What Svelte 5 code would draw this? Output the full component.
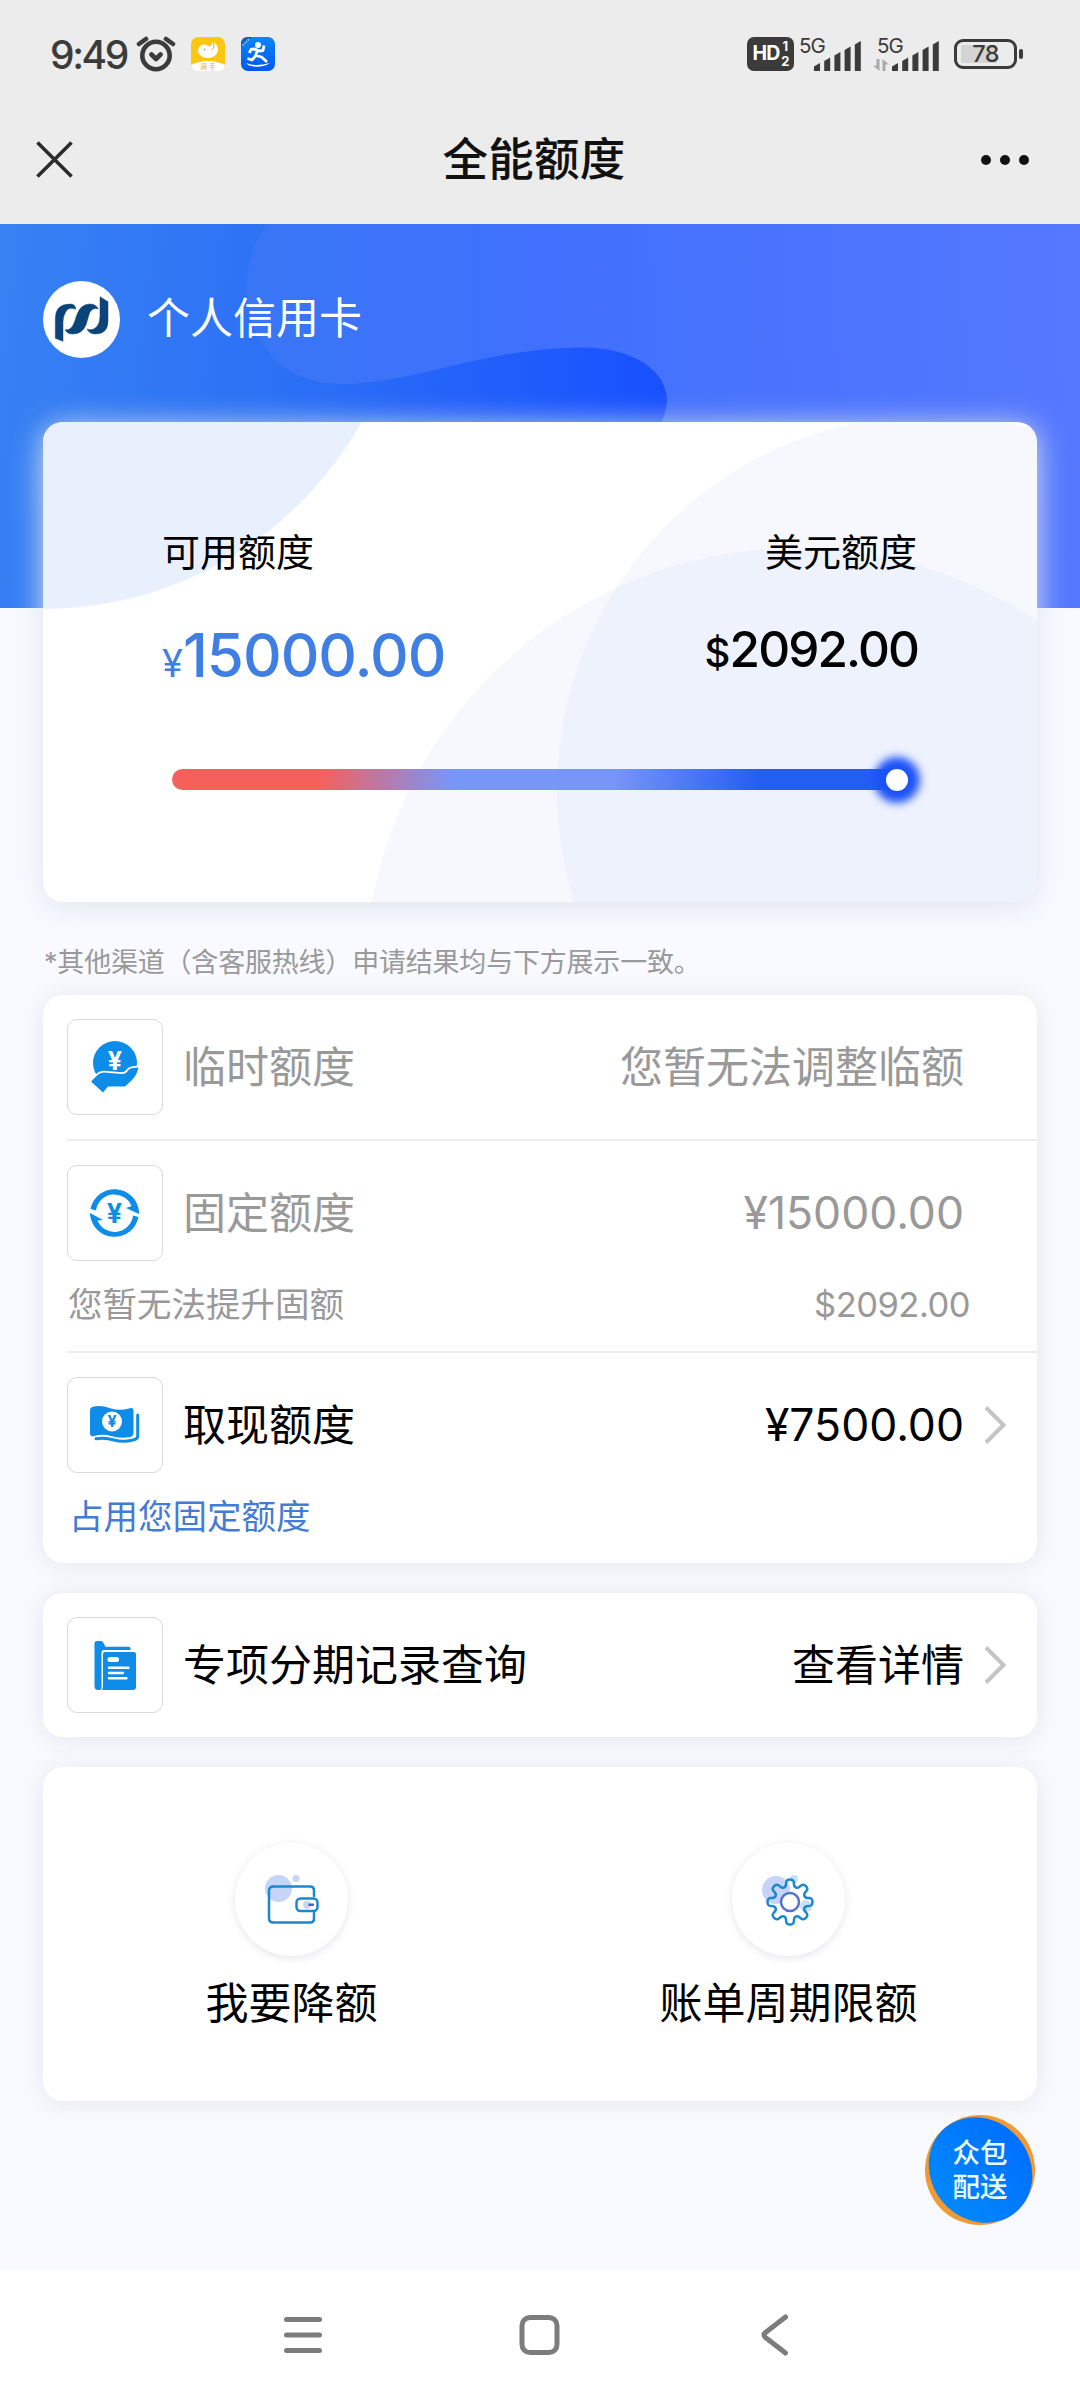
<script lang="ts">
    interface Row {
        icon: string;
        label: string;
        value: string;
        muted?: boolean;
        arrow?: boolean;
        note?: string;
        noteValue?: string;
    }

    const limits: Row[] = [
        { icon: "hand", label: "临时额度", value: "您暂无法调整临额", muted: true },
        {
            icon: "cycle",
            label: "固定额度",
            value: "¥15000.00",
            muted: true,
            note: "您暂无法提升固额",
            noteValue: "$2092.00",
        },
        { icon: "cash", label: "取现额度", value: "¥7500.00", arrow: true, note: "占用您固定额度" },
    ];
    const records: Row[] = [
        { icon: "folder", label: "专项分期记录查询", value: "查看详情", arrow: true },
    ];

    const bars = [8, 13.5, 19, 24.5, 30];

    // outline of an eight-tooth gear, corners rounded through the edge midpoints
    function gear(cx: number, cy: number, outer: number, inner: number) {
        const pts: number[][] = [];
        for (let i = 0; i < 8; i++) {
            const steps = [
                [-14, inner],
                [-10, outer],
                [10, outer],
                [14, inner],
            ];
            for (const [deg, r] of steps) {
                const a = ((i * 45 + deg) * Math.PI) / 180;
                pts.push([cx + r * Math.sin(a), cy - r * Math.cos(a)]);
            }
        }
        const mid = (p: number[], q: number[]) =>
            ((p[0] + q[0]) / 2).toFixed(1) + " " + ((p[1] + q[1]) / 2).toFixed(1);
        let d = "M" + mid(pts[pts.length - 1], pts[0]);
        pts.forEach((p, i) => {
            d += "Q" + p[0].toFixed(1) + " " + p[1].toFixed(1) + " " + mid(p, pts[(i + 1) % pts.length]);
        });
        return d + "Z";
    }
</script>

{#snippet signal()}
    <svg class="signal" viewBox="0 0 48 32">
        {#each bars as h, i}
            <path d="M{i * 10.2} 31V{34.5 - h}l6 -3.5V31Z" />
        {/each}
    </svg>
{/snippet}

{#snippet rows(list: Row[])}
    {#each list as row}
        <div class="row" class:muted={row.muted}>
            <div class="line">
                <div class="ico">
                    <svg viewBox="0 0 96 96">
                        {#if row.icon === "hand"}
                            <circle cx="48" cy="44" r="22" />
                            <text class="yen light" x="48" y="50.5" font-size="25">¥</text>
                            <path
                                class="gap"
                                d="M24 62.500L29.500 57Q33 53.500 37 53.500L55 55Q59 55 62 50.500Q64 48.500 71.500 48.500Q70 56 65 61L58 67.500H41L36 73.500Z"
                            />
                        {:else if row.icon === "cycle"}
                            <path d="M23.500 44A24.500 24.500 0 0 1 72 47V49L59 43L64.500 41A18.500 18.500 0 0 0 29 45.500Z" />
                            <path d="M71.500 52A24.500 24.500 0 0 1 23 49V48L36 55L30.500 55.500A18.500 18.500 0 0 0 66 50.500Z" />
                            <text class="yen" x="47.500" y="58" font-size="27">¥</text>
                        {:else if row.icon === "cash"}
                            <path d="M23 33Q23 30 27 29.500Q34 28 44 31.500Q53 34 62 31.500Q66.500 30 66.500 34V56Q66.500 59 63 60Q53 62 44 59Q36 56.500 27 59Q23 60 23 56Z" />
                            <path class="stroke" d="M70.700 38V59Q70.700 62 66 63Q56 65.500 47 63Q38 60.500 29 61.800" />
                            <circle class="light" cx="45" cy="44.500" r="10" />
                            <text class="yen" x="45" y="50" font-size="16">¥</text>
                        {:else}
                            <path d="M27.500 26Q27.500 24 30 24H34Q35.500 24 36.500 26L38.500 29.700H61.500Q63.500 29.700 63.500 31.700V33H37Q34.500 33 34.500 36V72Q34 73 31 73Q27.500 73 27.500 69Z" />
                            <path d="M38 35H67Q69 35 69 37V70Q69 73 66 73H34.500Q36 72 36 69V37Q36 35 38 35Z" />
                            <path class="lines" d="M42 50.700H61.500M42 56H56M42 61.200H59.500" />
                            <path class="lines thick" d="M43 42.500H49.500" />
                        {/if}
                    </svg>
                </div>
                <span class="label">{row.label}</span>
                <span class="value" class:num={row.value.startsWith("¥")}>{row.value}</span>
                {#if row.arrow}
                    <svg class="chevron" viewBox="0 0 24 40"><path d="M3 2.500L20.500 20L3 37.500" /></svg>
                {/if}
            </div>
            {#if row.note}
                <div class="note" class:link={!row.muted}>
                    <span>{row.note}</span>
                    {#if row.noteValue}<span class="usd">{row.noteValue}</span>{/if}
                </div>
            {/if}
        </div>
    {/each}
{/snippet}

<div class="screen">
    <div class="status">
        <span class="time">9:49</span>
        <svg class="alarm" viewBox="0 0 40 36">
            <circle cx="20" cy="19.500" r="13.700" />
            <path d="M3 8L10 3M37 8L30 3M15.500 18.500L20 23L24.500 18.500" />
        </svg>
        <svg class="app" viewBox="0 0 34 34">
            <rect width="34" height="34" rx="7" fill="#fdc60f" />
            <path d="M0 28Q8 24 17 24T34 28Q33 34 27 34H7Q1 34 0 28Z" fill="#fff" />
            <path d="M7 13C8 8 13 6 17.500 9C20 10 21 8 21 5.500C27 6 28.500 13 25.500 17C22 22 13 22 9 18Q7 16 7 13Z" fill="#fff" />
            <circle cx="13.500" cy="12.500" r="0.900" fill="#b9a37a" />
            <path d="M22.500 6q1.500 5-2 6.500" fill="none" stroke="#e6b416" stroke-width="1" />
            <text x="17" y="32" font-size="6.500" text-anchor="middle" fill="#dcb53f">骑 手</text>
        </svg>
        <svg class="app" viewBox="0 0 34 34">
            <defs>
                <linearGradient id="run" x1="0" y1="0" x2="0" y2="1">
                    <stop offset="0" stop-color="#0a86fb" />
                    <stop offset="1" stop-color="#0058ec" />
                </linearGradient>
            </defs>
            <rect width="34" height="34" rx="7" fill="url(#run)" />
            <path d="M0 11L11 0H7Q0 0 0 7Z" fill="#0a5fc0" />
            <path d="M1.500 8.500L8.500 1.500" stroke="#9cc4f5" stroke-width="2" stroke-dasharray="1.500 1" />
            <circle cx="17" cy="8" r="3" fill="#fff" />
            <path
                d="M9 12.500L14 12L18 14L22 13.500L23 8.500M16.500 13L14.500 19L11 23L6.500 21.500M15 18.500L20.500 20L26 25M9.500 13L8.500 16"
                fill="none"
                stroke="#fff"
                stroke-width="2.800"
                stroke-linejoin="round"
            />
            <path d="M5 26Q14 30 29 26Q20 32 8 28.500Z" fill="#fff" />
        </svg>
        <span class="spacer"></span>
        <div class="hd">
            <b>HD</b>
            <span><b>1</b><b>2</b></span>
        </div>
        <div class="net">
            <span>5G</span>
            {@render signal()}
        </div>
        <div class="net second">
            <span>5G</span>
            <svg class="arrows" viewBox="0 0 16 12"><path d="M0 6.500h3.500V0H6.500V12ZM16 5.500h-3.500V12H9.500V0Z" /></svg>
            {@render signal()}
        </div>
        <div class="battery"><span>78</span></div>
    </div>

    <div class="bar">
        <svg class="close" viewBox="0 0 38 38"><path d="M1.500 1.500L36.500 36.500M36.500 1.500L1.500 36.500" /></svg>
        <h1>全能额度</h1>
        <svg class="more" viewBox="0 0 50 12">
            <circle cx="6" cy="6" r="5" />
            <circle cx="25" cy="6" r="5" />
            <circle cx="44" cy="6" r="5" />
        </svg>
    </div>

    <div class="page">
        <div class="hero">
            <svg class="wave" viewBox="0 224 1080 384">
                <defs>
                    <linearGradient id="deep" gradientUnits="userSpaceOnUse" x1="0" y1="300" x2="665" y2="380">
                        <stop offset="0" stop-color="#3781f3" />
                        <stop offset="0.500" stop-color="#2a6df6" />
                        <stop offset="1" stop-color="#1850ff" />
                    </linearGradient>
                    <linearGradient id="soft" gradientUnits="userSpaceOnUse" x1="247" y1="300" x2="1080" y2="260">
                        <stop offset="0" stop-color="#3876f5" />
                        <stop offset="0.350" stop-color="#4070fd" />
                        <stop offset="1" stop-color="#5578ff" />
                    </linearGradient>
                </defs>
                <rect y="224" width="1080" height="384" fill="url(#deep)" />
                <path
                    d="M267 224C246 252 240 296 256 332C273 369 306 385 346 384C420 382 480 349 580 347.500C638 347 668 374 667 402Q666 412 661 424L640 608H1080V224Z"
                    fill="url(#soft)"
                />
            </svg>
            <div class="owner">
                <svg class="logo" viewBox="39 35 231 231">
                    <circle cx="154.500" cy="150.500" r="115.500" fill="#fff" />
                    <path d="M76 207V148Q76 104 120 104Q137 104 137 120Q115 110 106 130Q99 140 99 160V216Z" />
                    <path d="M105 181Q116 184 126 173Q133 163 140 138Q151 104 180 104Q197 104 205 119Q188 114 179 130Q174 145 168 167Q157 194 128 194Q112 194 105 181Z" />
                    <path d="M210 82L234 97V155Q234 194 196 194Q178 194 171 179Q189 185 200 172Q210 162 210 140Z" />
                </svg>
                <span>个人信用卡</span>
            </div>
        </div>

        <section class="card summary">
            <svg class="deco" viewBox="0 0 994 480">
                <circle cx="0" cy="-178" r="365" fill="#e9f0fd" />
                <circle cx="754" cy="558" r="432" fill="#d0defb" fill-opacity="0.200" />
                <circle cx="889" cy="368" r="375" fill="#d0defb" fill-opacity="0.200" />
            </svg>
            <div class="totals">
                <div class="total">
                    <span class="caption">可用额度</span>
                    <span class="amount main"><small>¥</small>15000.00</span>
                </div>
                <div class="total right">
                    <span class="caption">美元额度</span>
                    <span class="amount"><small>$</small>2092.00</span>
                </div>
            </div>
            <div class="track"><i></i></div>
        </section>

        <p class="tip">*其他渠道（含客服热线）申请结果均与下方展示一致。</p>

        <section class="card">
            {@render rows(limits)}
        </section>
        <section class="card">
            {@render rows(records)}
        </section>

        <section class="card actions">
            <div class="action">
                <svg viewBox="0 0 113 113">
                    <circle cx="43.500" cy="45.500" r="13.500" fill="#c6d4f8" />
                    <circle cx="61" cy="35.500" r="3.500" fill="#c6d4f8" />
                    <path d="M79 53V47.500Q79 43.500 75 43.500H38.500Q34 43.500 34 48V75Q34 79.500 38.500 79.500H75Q79 79.500 79 75.500V70" />
                    <rect x="61.500" y="55.500" width="21" height="12.500" rx="4" />
                    <circle cx="72" cy="61.700" r="4" fill="#c6d4f8" />
                    <path class="clasp" d="M74.500 61.700H78" />
                </svg>
                <span>我要降额</span>
            </div>
            <div class="action">
                <svg viewBox="0 0 113 113">
                    <circle cx="44" cy="47" r="14" fill="#c6d4f8" />
                    <circle cx="62" cy="36" r="4" fill="#c6e0fb" />
                    <circle cx="74" cy="63" r="6" fill="#c6e0fb" />
                    <path d={gear(58, 59, 22.8, 15.8)} />
                    <circle cx="58" cy="59" r="9" stroke="#5173cb" fill="#fff" />
                </svg>
                <span>账单周期限额</span>
            </div>
        </section>

        <div class="float">
            <i></i>
            <span>众包<br />配送</span>
        </div>
    </div>

    <div class="nav">
        <svg viewBox="0 0 44 44"><path d="M5.500 6.500H38.500M5.500 22H38.500M5.500 37.500H38.500" /></svg>
        <svg viewBox="0 0 44 44"><rect x="4" y="4.500" width="35" height="35" rx="8" /></svg>
        <svg viewBox="0 0 44 44"><path d="M31.500 4L11.500 19.500Q8.500 22 11.500 24.500L31.500 40" /></svg>
    </div>
</div>

<style>
    :global(body) {
        background: #f8faff;
    }
    * {
        box-sizing: border-box;
    }
    .screen {
        display: flex;
        flex-direction: column;
        width: 1080px;
        height: 2400px;
        overflow: hidden;
        font-family: Inter, "Noto Sans CJK SC", sans-serif;
        line-height: 1;
        color: #000;
        white-space: nowrap;
    }
    svg {
        display: block;
        flex: none;
    }
    .status {
        display: flex;
        align-items: center;
        height: 108px;
        padding: 0 57px 0 50px;
        background: #ececec;
        color: #3b3b3b;
    }
    .time {
        width: 86px;
        font-size: 39px;
        font-weight: 500;
        letter-spacing: -2.4px;
    }
    .alarm {
        width: 40px;
        height: 36px;
        margin-right: 15px;
        fill: none;
        stroke: #3b3b3b;
        stroke-width: 4.6;
        stroke-linecap: round;
        stroke-linejoin: round;
    }
    .app {
        width: 34px;
        height: 34px;
        margin-right: 16px;
    }
    .spacer {
        flex: 1;
    }
    .hd {
        display: flex;
        align-items: center;
        justify-content: center;
        gap: 2px;
        width: 47px;
        height: 34px;
        border-radius: 7px;
        background: #3b3b3b;
        color: #fff;
        font-size: 19.5px;
        letter-spacing: -1px;
    }
    .hd span {
        display: flex;
        flex-direction: column;
        align-items: center;
        gap: 2px;
        font-size: 13px;
        line-height: 13px;
    }
    .net {
        display: grid;
        width: 63px;
        height: 36px;
        margin-left: 5px;
        font-size: 20.5px;
        letter-spacing: -1px;
    }
    .net > * {
        grid-area: 1 / 1;
    }
    .net.second {
        width: 67px;
        margin-left: 11px;
    }
    .net.second > span {
        padding-left: 4px;
    }
    .signal {
        align-self: end;
        justify-self: end;
        width: 48px;
        height: 32px;
        fill: #3b3b3b;
    }
    .arrows {
        align-self: end;
        width: 16px;
        height: 12px;
        margin-bottom: 1px;
        fill: #a9a9a9;
    }
    .battery {
        position: relative;
        display: flex;
        align-items: center;
        justify-content: center;
        width: 63px;
        height: 30px;
        margin: 0 6px 0 14px;
        border: 3px solid #3b3b3b;
        border-radius: 9px;
        background: linear-gradient(#d4d4d4, #d4d4d4) 4px center / 36px 18px no-repeat;
        font-size: 23.5px;
        font-weight: 500;
        letter-spacing: -0.8px;
    }
    .battery::after {
        content: "";
        position: absolute;
        right: -9px;
        width: 4px;
        height: 10px;
        border-radius: 2px;
        background: #3b3b3b;
    }
    .bar {
        display: flex;
        align-items: center;
        justify-content: space-between;
        height: 116px;
        padding: 0 50px 13px 36px;
        background: #ececec;
    }
    .bar h1 {
        margin: 0;
        padding-left: 15px;
        font-size: 45.5px;
        font-weight: 500;
        letter-spacing: 0.3px;
        color: #111;
    }
    .close {
        width: 37px;
        height: 37px;
        stroke: #2b2b2b;
        stroke-width: 3.6;
    }
    .more {
        width: 50px;
        height: 12px;
        fill: #111;
    }
    .page {
        position: relative;
        height: 2046px;
        background: #f8faff;
    }
    .hero {
        position: relative;
        height: 384px;
        padding: 57px 43px;
    }
    .wave {
        position: absolute;
        inset: 0;
        width: 1080px;
        height: 384px;
    }
    .owner {
        position: relative;
        display: flex;
        align-items: center;
        gap: 27px;
        color: #fff;
        font-size: 43px;
    }
    .owner span {
        margin-top: -2px;
    }
    .logo {
        width: 77px;
        height: 77px;
        fill: #0b4478;
        stroke: #0b4478;
        stroke-width: 1.5;
    }
    .logo circle {
        stroke: none;
    }
    .card {
        position: relative;
        margin: 0 43px 30px;
        border-radius: 20px;
        background: #fff;
        box-shadow: 0 2px 24px rgba(60, 60, 80, 0.1);
    }
    .summary {
        height: 480px;
        margin-top: -186px;
        margin-bottom: 0;
        padding: 111px 120px 0 119px;
        box-shadow: 0 4px 30px #dfe4ea;
    }
    .deco {
        position: absolute;
        inset: 0;
        width: 994px;
        height: 480px;
        border-radius: 20px;
    }
    .totals {
        position: relative;
        display: flex;
        justify-content: space-between;
    }
    .total {
        display: flex;
        flex-direction: column;
    }
    .total.right {
        align-items: flex-end;
    }
    .caption {
        font-size: 38px;
    }
    .amount {
        margin-top: 54px;
        margin-right: -1px;
        font-size: 49.5px;
        font-weight: 500;
        letter-spacing: -1.9px;
    }
    .amount small {
        margin-right: 1px;
        font-size: 40px;
    }
    .amount.main {
        color: #3f7fe4;
        font-size: 60px;
        letter-spacing: -1px;
    }
    .amount.main small {
        font-size: 38px;
        font-weight: 400;
    }
    .track {
        position: relative;
        display: flex;
        align-items: center;
        justify-content: flex-end;
        width: 736px;
        height: 21px;
        margin: 84px 0 0 10px;
        border-radius: 11px;
        background: linear-gradient(90deg, #f5605c 20%, #7895f8 38%, #7895f8 60%, #245df2 80%);
    }
    .track i {
        width: 22px;
        height: 22px;
        border-radius: 50%;
        background: #fff;
        box-shadow: 0 0 9px 12px #1c52f8;
    }
    .tip {
        margin: 47px 0 19px 44px;
        font-size: 27px;
        letter-spacing: -0.2px;
        color: #999;
    }
    .row {
        margin-left: 24px;
        padding: 24px 0;
    }
    .row + .row {
        border-top: 2px solid #ececee;
    }
    .line {
        display: flex;
        align-items: center;
        padding-right: 73px;
        font-size: 43px;
    }
    .line:has(.chevron) {
        padding-right: 30px;
    }
    .muted {
        color: #999;
    }
    .ico {
        width: 96px;
        height: 96px;
        margin-right: 20px;
        border: 1.5px solid #d9d9d9;
        border-radius: 10px;
    }
    .ico svg {
        margin: -1px;
        width: 96px;
        height: 96px;
        fill: #0d8ce8;
    }
    .ico .yen {
        font-weight: 700;
        text-anchor: middle;
    }
    .ico .light {
        fill: #fff;
    }
    .ico .gap {
        stroke: #fff;
        stroke-width: 3.6;
        paint-order: stroke;
    }
    .ico .stroke {
        fill: none;
        stroke: #0d8ce8;
        stroke-width: 3;
        stroke-linecap: round;
    }
    .ico .lines {
        stroke: #fff;
        stroke-width: 2.4;
        stroke-linecap: round;
    }
    .ico .thick {
        stroke-width: 5;
    }
    .value {
        margin-left: auto;
    }
    .value.num {
        font-size: 44.5px;
    }
    .chevron {
        width: 24px;
        height: 40px;
        margin-left: 19px;
        fill: none;
        stroke: #c4c4c4;
        stroke-width: 4;
    }
    .note {
        display: flex;
        justify-content: space-between;
        align-items: center;
        height: 34px;
        margin-top: 27px;
        padding: 0 67px 0 1px;
        font-size: 34.5px;
    }
    .note.link {
        padding-left: 2px;
        color: #447bd6;
    }
    .usd {
        letter-spacing: -0.5px;
    }
    .row:has(.note) {
        padding-bottom: 29px;
    }
    .actions {
        display: flex;
        height: 334px;
        margin-bottom: 0;
        padding-top: 76px;
    }
    .action {
        display: flex;
        flex: 1;
        flex-direction: column;
        align-items: center;
        gap: 26px;
        font-size: 43px;
    }
    .action svg {
        width: 113px;
        height: 113px;
        border-radius: 50%;
        box-shadow: 0 2px 9px rgba(50, 50, 110, 0.12);
        fill: none;
        stroke-width: 2.5;
        stroke-linejoin: round;
        stroke-linecap: round;
    }
    .action svg path,
    .action svg rect {
        stroke: #1c86cf;
    }
    .action svg .clasp {
        stroke: #5360c0;
    }
    .float {
        position: absolute;
        right: 45px;
        bottom: 45px;
        display: grid;
        place-items: center;
        width: 110px;
        height: 110px;
        border-radius: 50%;
        background: #f09a35;
        color: #e8fbff;
        font-size: 27.5px;
        font-weight: 500;
        line-height: 34px;
    }
    .float > * {
        grid-area: 1 / 1;
    }
    .float i {
        width: 99px;
        height: 110px;
        border-radius: 50%;
        background: linear-gradient(90deg, #0088fb, #0070ff);
        transform: rotate(-40deg);
    }
    .float span {
        position: relative;
    }
    .nav {
        display: flex;
        justify-content: space-between;
        height: 130px;
        padding: 43px 282px 0 281px;
        background: #fff;
    }
    .nav svg {
        width: 44px;
        height: 44px;
        fill: none;
        stroke: #7c7c7c;
        stroke-width: 5;
        stroke-linecap: round;
    }
</style>
